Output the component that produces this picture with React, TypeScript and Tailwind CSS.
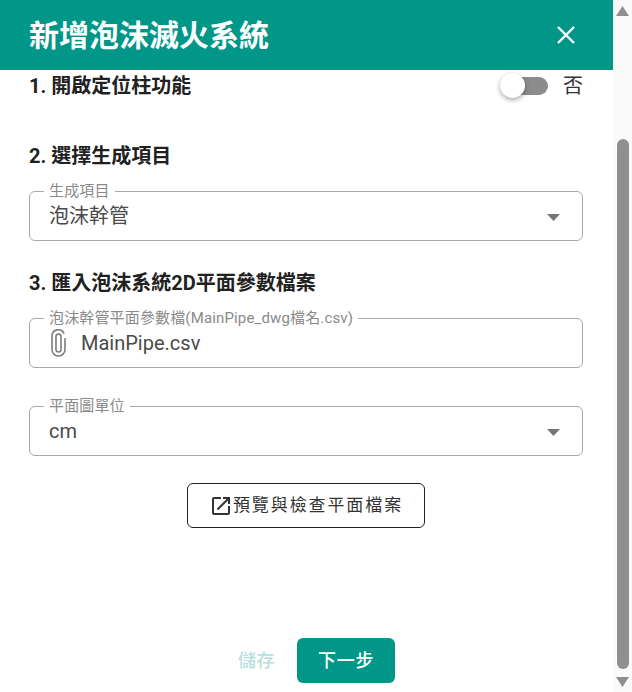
const font = { fontFamily: '"Roboto", "Noto Sans CJK TC", sans-serif' };

function OutlinedField({ label, children, arrow }: { label: string; children: React.ReactNode; arrow?: boolean }) {
  return (
    <fieldset className="h-[57px] rounded-[6px] border border-[#a8a8a8] pl-[19px] pr-[22px] m-0 min-w-0">
      <legend className="-ml-[5px] px-[5px] text-[15px] leading-[15px] tracking-[0.15px] text-[#8a8a8a]">{label}</legend>
      <div className="flex h-[34px] items-center text-[#4a4a4a] text-[20px]">
        <div className="flex-1 flex items-center">{children}</div>
        {arrow && (
          <svg width="13" height="7" viewBox="0 0 13 7" className="mt-[2px]">
            <path d="M0 0h13L6.5 7z" fill="#757575" />
          </svg>
        )}
      </div>
    </fieldset>
  );
}

export default function App() {
  return (
    <div className="flex h-[692px] w-[632px] overflow-hidden bg-white" style={font}>
      <div className="flex w-[613px] flex-col">
        {/* Header */}
        <div className="flex h-[70px] shrink-0 items-center justify-between bg-[#009688] pl-[29px] pr-[37px] text-white">
          <h1 className="text-[30px] font-bold">新增泡沫滅火系統</h1>
          <svg width="20" height="20" viewBox="0 0 20 20" fill="none" stroke="white" strokeWidth="2.4">
            <path d="M2 2l16 16M18 2L2 18" />
          </svg>
        </div>

        {/* Form */}
        <div className="flex flex-1 flex-col pl-[29px] pr-[30px] text-[#212121]">
          <div className="flex h-[32px] items-center justify-between">
            <div className="text-[20px] font-bold leading-[30px]">1. 開啟定位柱功能</div>
            <div className="flex items-center gap-[15px]">
              <div className="relative h-[18px] w-[36px] rounded-r-full bg-[#8c8c8c]">
                <div className="absolute -left-[12px] -top-[4px] h-[25px] w-[25px] rounded-full bg-white shadow-[0_2px_5px_rgba(0,0,0,0.35)]" />
              </div>
              <span className="text-[20px] text-[#333]">否</span>
            </div>
          </div>

          <div className="mt-[39px] text-[20px] font-bold leading-[30px]">2. 選擇生成項目</div>
          <div className="mt-[13px]">
            <OutlinedField label="生成項目" arrow>
              <span>泡沫幹管</span>
            </OutlinedField>
          </div>

          <div className="mt-[27px] text-[20px] font-bold leading-[30px]">3. 匯入泡沫系統2D平面參數檔案</div>
          <div className="mt-[13px]">
            <OutlinedField label="泡沫幹管平面參數檔(MainPipe_dwg檔名.csv)">
              <svg width="15" height="28" viewBox="0 0 15 28" fill="none" stroke="#7d7d7d" strokeWidth="1.6" className="ml-[2px] mr-[15px]">
                <path d="M10 7.5v13a2.5 2.5 0 0 1-5 0v-13a2.5 2.5 0 0 1 5 0" />
                <path d="M14 9v11.5a6.5 6.5 0 0 1-13 0V7a6.2 6.2 0 0 1 12-2.2" />
              </svg>
              <span>MainPipe.csv</span>
            </OutlinedField>
          </div>

          <div className="mt-[31px]">
            <OutlinedField label="平面圖單位" arrow>
              <span>cm</span>
            </OutlinedField>
          </div>

          <div className="mt-[27px] flex justify-center">
            <button className="flex h-[45px] w-[238px] items-center justify-center rounded-[6px] border border-[#212121] bg-white text-[17px] text-[#333] tracking-[1.9px]">
              <svg width="24" height="24" viewBox="0 0 24 24" fill="#333">
                <path d="M19 19H5V5h7V3H5a2 2 0 0 0-2 2v14a2 2 0 0 0 2 2h14c1.1 0 2-.9 2-2v-7h-2v7zM14 3v2h3.59l-9.83 9.83 1.41 1.41L19 6.41V10h2V3h-7z" />
              </svg>
              預覽與檢查平面檔案
            </button>
          </div>

          <div className="mt-auto mb-[9px] flex items-center justify-center gap-[22px] pl-[21px]">
            <span className="text-[18px] font-medium tracking-[0.6px] text-[#b9e0dc]">儲存</span>
            <button className="h-[45px] w-[98px] rounded-[6px] bg-[#009688] text-[18px] font-medium tracking-[0.7px] text-white">下一步</button>
          </div>
        </div>
      </div>

      {/* Scrollbar */}
      <div className="flex w-[19px] flex-col items-center bg-[#fafafa] pt-[6px] pb-[5px]">
        <svg width="13" height="10" viewBox="0 0 13 10"><path d="M6.5 0L13 10H0z" fill="#8f8f8f" /></svg>
        <div className="mt-[123px] w-[12px] flex-1 rounded-full bg-[#8f8f8f]" />
        <svg width="13" height="10" viewBox="0 0 13 10" className="mt-[8px]"><path d="M0 0h13L6.5 10z" fill="#8f8f8f" /></svg>
      </div>
    </div>
  );
}
